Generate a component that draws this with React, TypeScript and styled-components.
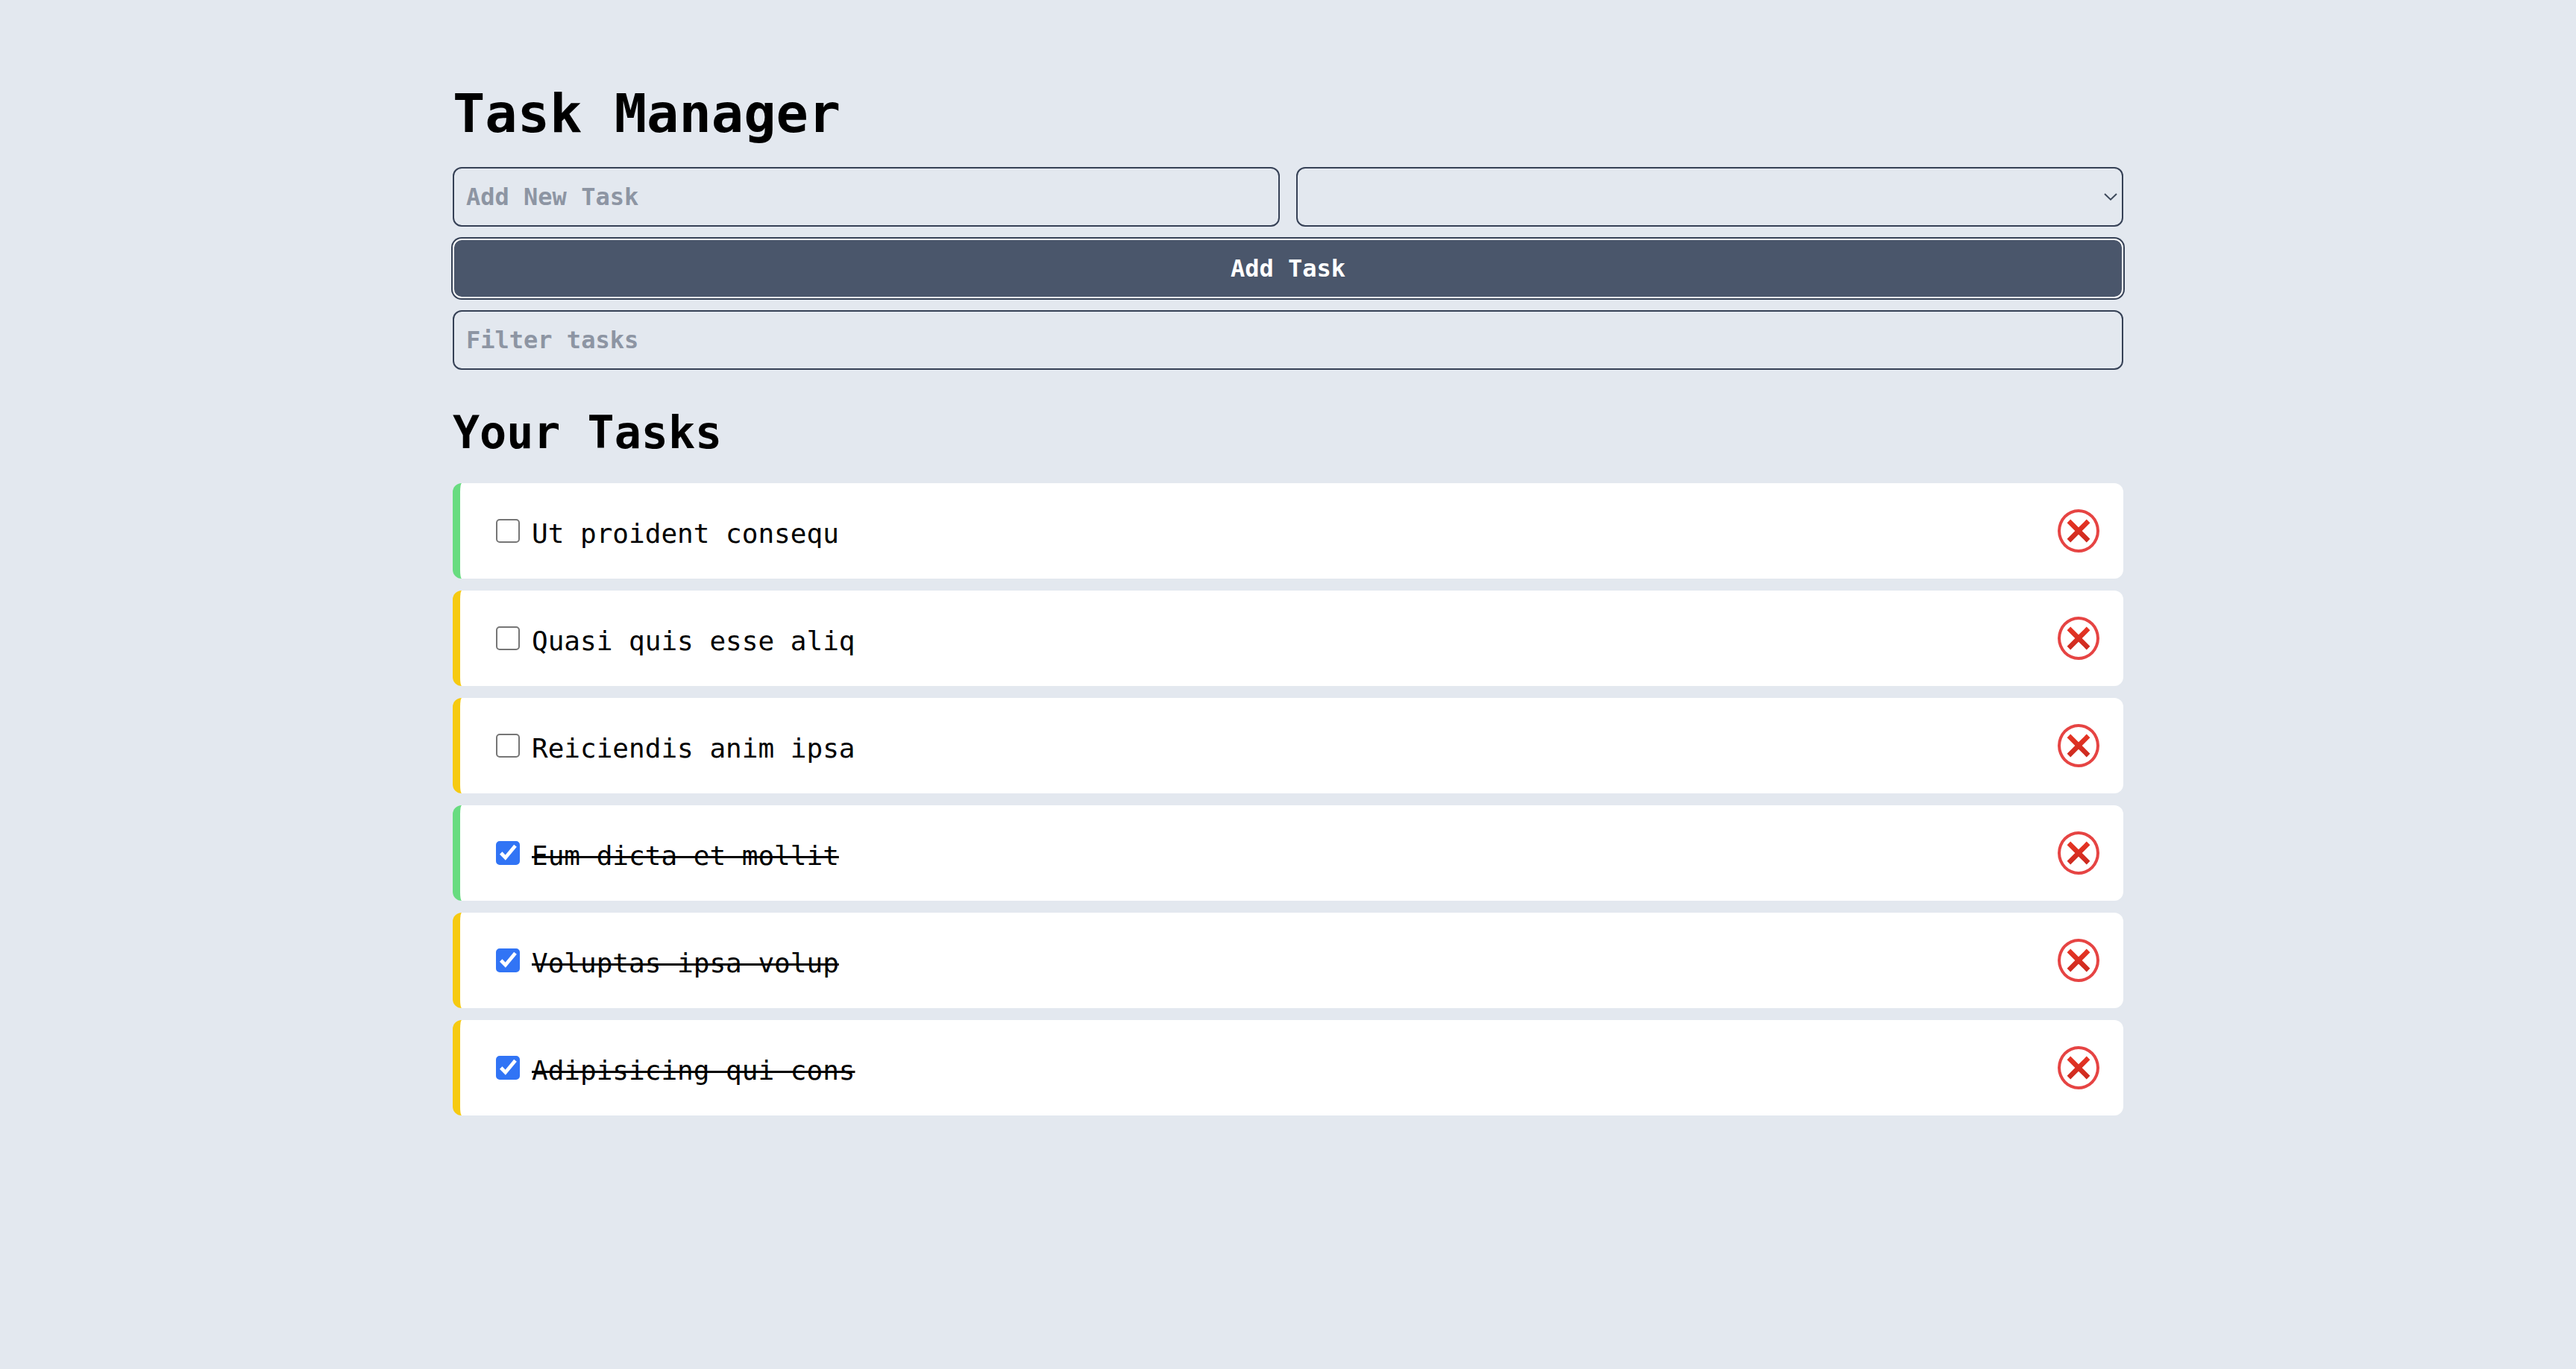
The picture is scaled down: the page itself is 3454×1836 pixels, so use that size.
import React, { useState } from "react";
import styled, { createGlobalStyle, css } from "styled-components";

type Priority = "low" | "medium" | "high";
type Task = { id: number; title: string; priority: Priority; done: boolean };

const accents: Record<Priority, string> = {
  low: "#68dc80",
  medium: "#f6ca11",
  high: "#e64443",
};

const initialTasks: Task[] = [
  { id: 1, title: "Ut proident consequ", priority: "low", done: false },
  { id: 2, title: "Quasi quis esse aliq", priority: "medium", done: false },
  { id: 3, title: "Reiciendis anim ipsa", priority: "medium", done: false },
  { id: 4, title: "Eum dicta et mollit", priority: "low", done: true },
  { id: 5, title: "Voluptas ipsa volup", priority: "medium", done: true },
  { id: 6, title: "Adipisicing qui cons", priority: "medium", done: true },
];

const GlobalStyle = createGlobalStyle`
  *, *::before, *::after { box-sizing: border-box; }
  body {
    margin: 0;
    background: #e3e8ef;
    color: #000;
    font-family: "DejaVu Sans Mono", Menlo, monospace;
  }
`;

const Page = styled.main`
  max-width: 2240px;
  margin: 0 auto;
  padding: 96px 0;
`;

const Title = styled.h1`
  margin: 0 0 16px;
  font-size: 72px;
  line-height: 112px;
`;

const Subtitle = styled.h2`
  margin: 32px 0 16px;
  font-size: 60px;
  line-height: 104px;
`;

const Form = styled.form`
  display: flex;
  flex-direction: column;
  gap: 16px;
`;

const FieldRow = styled.div`
  display: grid;
  grid-template-columns: 1fr 1fr;
  gap: 22px;
`;

const field = css`
  width: 100%;
  height: 80px;
  padding: 0 16px;
  border: 2px solid #364156;
  border-radius: 12px;
  background: transparent;
  color: #000;
  font: bold 32px "DejaVu Sans Mono", Menlo, monospace;
  outline: none;
`;

const TextInput = styled.input`
  ${field}
  &::placeholder {
    color: #8d95a3;
    opacity: 1;
  }
`;

const SelectBox = styled.div`
  display: grid;
  align-items: center;
  > * {
    grid-area: 1 / 1;
  }
`;

const Select = styled.select`
  ${field}
  appearance: none;
`;

const SelectArrow = styled.svg`
  justify-self: end;
  margin-right: 8px;
  width: 18px;
  height: 10px;
  pointer-events: none;
`;

const SubmitButton = styled.button`
  height: 80px;
  border: 2px solid #fff;
  border-radius: 12px;
  background: #4a566b;
  box-shadow: 0 0 0 2px #364156;
  color: #fff;
  font: bold 32px "DejaVu Sans Mono", Menlo, monospace;
  cursor: pointer;
`;

const TaskList = styled.ul`
  display: flex;
  flex-direction: column;
  gap: 16px;
  margin: 0;
  padding: 0;
  list-style: none;
`;

const TaskCard = styled.li<{ $accent: string }>`
  display: flex;
  align-items: center;
  justify-content: space-between;
  height: 128px;
  padding: 0 32px 0 48px;
  border-left: 10px solid ${(p) => p.$accent};
  border-radius: 12px;
  background: #fff;
`;

const TaskLabel = styled.label`
  display: flex;
  align-items: center;
  gap: 16px;
  font-size: 36px;
  line-height: 56px;
  cursor: pointer;
`;

const TaskText = styled.span<{ $done: boolean }>`
  padding-top: 8px;
  text-decoration: ${(p) => (p.$done ? "line-through 3px" : "none")};
`;

const CheckWrap = styled.span`
  display: grid;
  > * {
    grid-area: 1 / 1;
  }
`;

const Checkbox = styled.input`
  appearance: none;
  width: 32px;
  height: 32px;
  margin: 0;
  border: 2px solid #767676;
  border-radius: 5px;
  background: #fff;
  &:checked {
    border-color: #3174f5;
    background: #3174f5;
  }
`;

const CheckMark = styled.svg`
  width: 32px;
  height: 32px;
  pointer-events: none;
`;

const DeleteButton = styled.button`
  display: grid;
  place-items: center;
  width: 56px;
  height: 58px;
  padding: 0;
  border: 4px solid #e64443;
  border-radius: 50%;
  background: transparent;
  cursor: pointer;
`;

function CrossIcon() {
  return (
    <svg width="32" height="32" viewBox="0 0 32 32" aria-hidden="true">
      <defs>
        <linearGradient id="cross" x1="0" y1="0" x2="0" y2="1">
          <stop offset="0" stopColor="#e83524" />
          <stop offset="1" stopColor="#cb2a20" />
        </linearGradient>
      </defs>
      <path
        fill="url(#cross)"
        d="M5.2 0.6L16 11.3L26.8 0.6L31.4 5.2L20.7 16L31.4 26.8L26.8 31.4L16 20.7L5.2 31.4L0.6 26.8L11.3 16L0.6 5.2Z"
      />
    </svg>
  );
}

export default function App() {
  const [tasks, setTasks] = useState(initialTasks);
  const [title, setTitle] = useState("");
  const [priority, setPriority] = useState<Priority | "">("");
  const [filter, setFilter] = useState("");

  const addTask = (e: React.FormEvent) => {
    e.preventDefault();
    if (!title || !priority) return;
    setTasks([...tasks, { id: Date.now(), title, priority, done: false }]);
    setTitle("");
    setPriority("");
  };

  const toggle = (id: number) =>
    setTasks(tasks.map((t) => (t.id === id ? { ...t, done: !t.done } : t)));

  const visible = tasks.filter((t) =>
    t.title.toLowerCase().includes(filter.toLowerCase())
  );

  return (
    <>
      <GlobalStyle />
      <Page>
        <Title>Task Manager</Title>
        <Form onSubmit={addTask}>
          <FieldRow>
            <TextInput
              aria-label="Add New Task"
              placeholder="Add New Task"
              value={title}
              onChange={(e) => setTitle(e.target.value)}
            />
            <SelectBox>
              <Select
                aria-label="Priority"
                value={priority}
                onChange={(e) => setPriority(e.target.value as Priority)}
              >
                <option value="" />
                <option value="low">Low</option>
                <option value="medium">Medium</option>
                <option value="high">High</option>
              </Select>
              <SelectArrow viewBox="0 0 18 10" aria-hidden="true">
                <path d="M1 1L9 8.6L17 1" fill="none" stroke="#3c485a" strokeWidth="2" />
              </SelectArrow>
            </SelectBox>
          </FieldRow>
          <SubmitButton type="submit">Add Task</SubmitButton>
          <TextInput
            aria-label="Filter tasks"
            placeholder="Filter tasks"
            value={filter}
            onChange={(e) => setFilter(e.target.value)}
          />
        </Form>
        <Subtitle>Your Tasks</Subtitle>
        <TaskList>
          {visible.map((task) => (
            <TaskCard key={task.id} $accent={accents[task.priority]}>
              <TaskLabel>
                <CheckWrap>
                  <Checkbox
                    type="checkbox"
                    checked={task.done}
                    onChange={() => toggle(task.id)}
                  />
                  {task.done && (
                    <CheckMark viewBox="0 0 32 32" aria-hidden="true">
                      <path d="M6.7 16L12.7 22.2L26 6.2" fill="none" stroke="#fff" strokeWidth="4.8" />
                    </CheckMark>
                  )}
                </CheckWrap>
                <TaskText $done={task.done}>{task.title}</TaskText>
              </TaskLabel>
              <DeleteButton
                type="button"
                aria-label={`Delete ${task.title}`}
                onClick={() => setTasks(tasks.filter((t) => t.id !== task.id))}
              >
                <CrossIcon />
              </DeleteButton>
            </TaskCard>
          ))}
        </TaskList>
      </Page>
    </>
  );
}
